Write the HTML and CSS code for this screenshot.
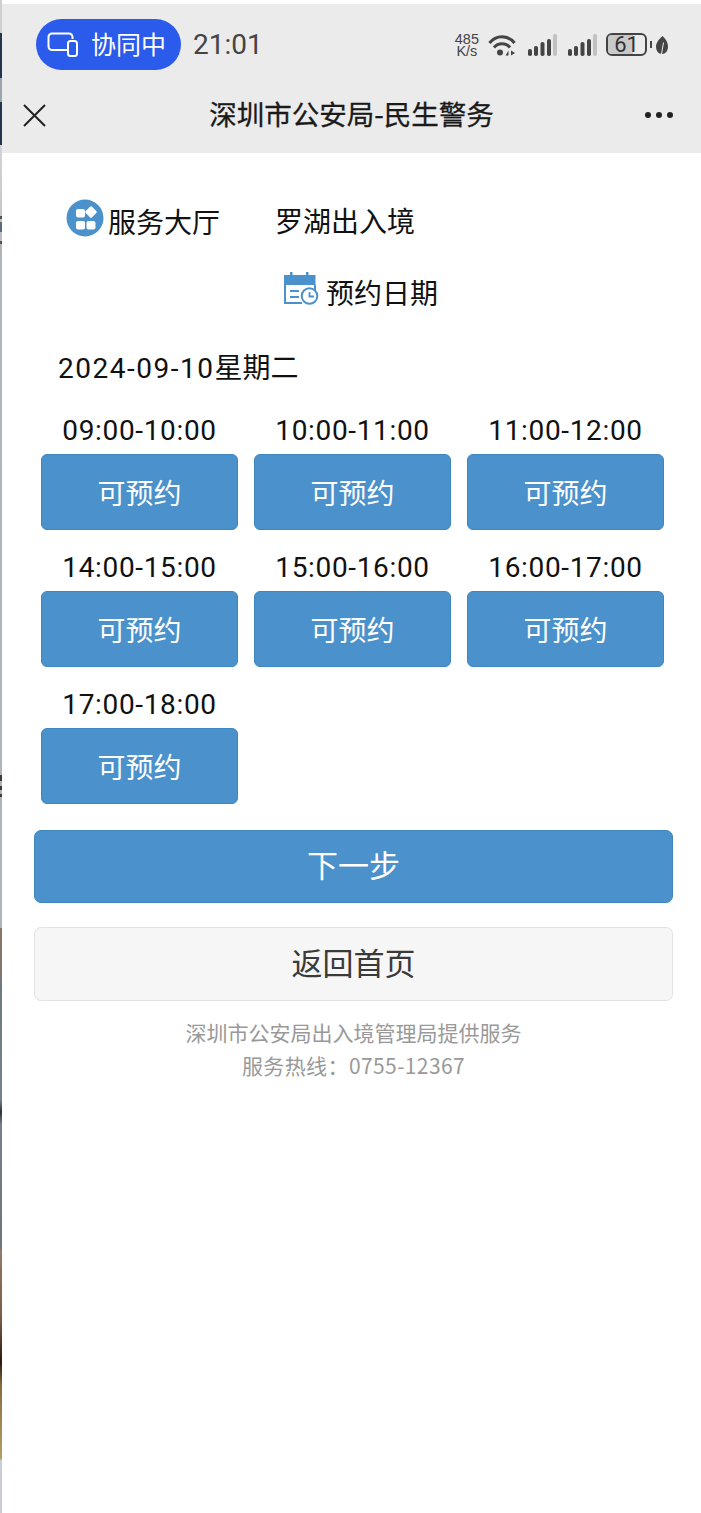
FILE: index.html
```html
<!DOCTYPE html>
<html lang="zh-CN">
<head>
    <meta charset="UTF-8">
    <meta name="viewport" content="width=device-width, initial-scale=1.0">
    <title>深圳市公安局-民生警务</title>
    <link rel="stylesheet" href="styles.css">
</head>
<body>
    <div class="edge"></div>
    <main class="phone">
        <header class="top">
            <div class="status">
                <div class="pill">
                    <svg class="pill_icon" width="32" height="26" viewBox="0 0 32 26" fill="none" stroke="#fff" stroke-width="2">
                        <path d="M21 18H5a3.500 3.500 0 0 1-3.500-3.500V5A3.500 3.500 0 0 1 5 1.500h17A3.500 3.500 0 0 1 25.500 5v2"/>
                        <rect x="21" y="9" width="9" height="15" rx="2.500"/>
                    </svg>
                    <span class="pill_text">协同中</span>
                </div>
                <span class="clock">21:01</span>
                <div class="indicators">
                    <div class="speed">485<br>K/s</div>
                    <svg class="wifi" width="28" height="22" viewBox="0 0 28 22" fill="none" stroke="#444" stroke-width="3">
                        <path d="M1.500 9C8 0.500 20 0.500 26.500 9"/>
                        <path d="M6 13.500C10 8.500 18 8.500 22 13.500"/>
                        <circle cx="12" cy="18.500" r="3" fill="#444" stroke="none"/>
                        <path d="M20.500 21.500V16.500L17.500 21.500zM23 16.500V21.500L27 19z" fill="#444" stroke="none"/>
                    </svg>
                    <svg class="bars" width="29" height="22" viewBox="0 0 29 22">
                        <rect x="0" y="15" width="4" height="7" rx="1.800" fill="#444"/>
                        <rect x="6" y="12" width="4" height="10" rx="1.800" fill="#444"/>
                        <rect x="12.500" y="8" width="4" height="14" rx="1.800" fill="#444"/>
                        <rect x="19" y="5" width="4" height="17" rx="1.800" fill="#444"/>
                        <rect x="25" y="0" width="4" height="22" rx="1.800" fill="#c2c2c2"/>
                    </svg>
                    <svg class="bars" width="29" height="22" viewBox="0 0 29 22">
                        <rect x="0" y="15" width="4" height="7" rx="1.800" fill="#444"/>
                        <rect x="6" y="12" width="4" height="10" rx="1.800" fill="#444"/>
                        <rect x="12.500" y="8" width="4" height="14" rx="1.800" fill="#444"/>
                        <rect x="19" y="5" width="4" height="17" rx="1.800" fill="#444"/>
                        <rect x="25" y="0" width="4" height="22" rx="1.800" fill="#c2c2c2"/>
                    </svg>
                    <div class="battery">
                        <div class="battery_fill"></div>
                        <span>61</span>
                    </div>
                    <div class="battery_tip"></div>
                    <svg width="12" height="18" viewBox="0 0 12 18">
                        <path d="M6.500 0C10 3 12 7 12 10.500 12 15 9.500 18 6 18 2.500 18 0 15 0 10.500 0 7 3 3 6.500 0Z" fill="#444"/>
                        <path d="M7.500 6.500L5.500 18" stroke="#ebebeb" stroke-width="1" fill="none"/>
                    </svg>
                </div>
            </div>
            <nav class="titlebar">
                <svg width="24" height="24" viewBox="0 0 24 24" stroke="#222" stroke-width="2">
                    <path d="M2 2l21 21M23 2L2 23"/>
                </svg>
                <h1>深圳市公安局-民生警务</h1>
                <div class="dots"><i></i><i></i><i></i></div>
            </nav>
        </header>

        <section class="content">
            <div class="hall">
                <div class="hall_label">
                    <svg width="38" height="38" viewBox="0 0 38 38">
                        <circle cx="19" cy="19" r="18.500" fill="#4b91cb"/>
                        <rect x="10" y="10" width="9" height="8.500" rx="2" fill="#fff"/>
                        <rect x="20.500" y="8.500" width="9" height="9" rx="1.500" fill="#fff" transform="rotate(45 25 13)"/>
                        <rect x="10" y="22" width="9" height="8.500" rx="2" fill="#fff"/>
                        <rect x="20.500" y="22" width="9" height="8.500" rx="2" fill="#fff"/>
                    </svg>
                    <span>服务大厅</span>
                </div>
                <span class="hall_name">罗湖出入境</span>
            </div>

            <div class="date_title">
                <svg width="35" height="33" viewBox="0 0 35 33">
                    <path d="M0 3h6V0h2.500v3h13.500V0h2.500v3h7v10H0z" fill="#4b91cb"/>
                    <path d="M1 13v18h17M31 13v5" fill="none" stroke="#4b91cb" stroke-width="2"/>
                    <path d="M6 18h9v2H6zM6 24h9v2H6z" fill="#4b91cb"/>
                    <circle cx="25.500" cy="24" r="7.800" fill="#fff" stroke="#4b91cb" stroke-width="2"/>
                    <path d="M25.500 20V24.500H30" fill="none" stroke="#4b91cb" stroke-width="1.800"/>
                </svg>
                <span>预约日期</span>
            </div>

            <p class="date"><span class="digits">2024-09-10</span>星期二</p>

            <div class="slots">
                <div class="slot"><label>09:00-10:00</label><button>可预约</button></div>
                <div class="slot"><label>10:00-11:00</label><button>可预约</button></div>
                <div class="slot"><label>11:00-12:00</label><button>可预约</button></div>
                <div class="slot"><label>14:00-15:00</label><button>可预约</button></div>
                <div class="slot"><label>15:00-16:00</label><button>可预约</button></div>
                <div class="slot"><label>16:00-17:00</label><button>可预约</button></div>
                <div class="slot"><label>17:00-18:00</label><button>可预约</button></div>
            </div>

            <button class="btn_next">下一步</button>
            <button class="btn_home">返回首页</button>

            <footer class="note">
                <p>深圳市公安局出入境管理局提供服务</p>
                <p class="hotline">服务热线：0755-12367</p>
            </footer>
        </section>
    </main>
</body>
</html>
```

FILE: styles.css
```css
* {
    padding: 0;
    margin: 0;
    box-sizing: border-box;
}
html, body {
    height: 100%;
}
body {
    display: flex;
    background: #fff;
    font-family: "Noto Sans CJK SC", "Noto Sans", sans-serif;
    color: #111;
    overflow: hidden;
}
/* sliver of the window underneath */
.edge {
    width: 2px;
    flex-shrink: 0;
    background: linear-gradient(180deg,
        #cfcfcf 0, #cfcfcf 33px,
        #24344c 33px, #24344c 78px, #9aa3ae 78px, #9aa3ae 102px, #24344c 102px, #24344c 145px,
        #d2d3d5 145px, #c6c8ca 216px, #555 216px, #555 219px, #c0c2c4 219px, #c0c2c4 222px,
        #5a6a80 222px, #5a6a80 232px, #bcbec0 232px, #bcbec0 241px, #555 241px, #555 244px,
        #b0b5ba 244px, #aeb4ba 775px, #3c3c3c 775px, #3c3c3c 781px, #aeb4ba 781px, #aeb4ba 786px,
        #3c3c3c 786px, #3c3c3c 790px, #aeb4ba 790px, #aeb4ba 794px, #3c3c3c 794px, #3c3c3c 797px,
        #aeb4ba 797px, #aeb4ba 928px,
        #8a766a 928px, #84766c 970px, #6f7a80 985px, #76828a 1100px, #2c3238 1112px, #76808a 1125px,
        #6e767a 1248px, #947a68 1250px, #7a5a44 1320px, #2a1a12 1362px, #8a6a40 1385px, #b5a065 1459px,
        #c9ccd4 1460px, #c9ccd4 1513px);
}
.phone {
    flex: 1;
    min-width: 0;
}
.top {
    margin-top: 4px;
    height: 149px;
    background: #ebebeb;
}
.status {
    display: flex;
    align-items: center;
    height: 77px;
    padding: 5px 33px 0 34px;
}
.pill {
    display: flex;
    align-items: center;
    gap: 12px;
    width: 145px;
    height: 51px;
    margin-top: -1px;
    padding-left: 11px;
    border-radius: 26px;
    background: #2a5bea;
    color: #fff;
    font-size: 25px;
}
.pill_icon {
    flex-shrink: 0;
}
.pill_text {
    margin-top: -3px;
}
.clock {
    margin-left: 12px;
    margin-top: -2px;
    font-family: "Roboto", sans-serif;
    font-size: 28px;
    color: #444;
}
.indicators {
    display: flex;
    align-items: center;
    margin-left: auto;
    margin-top: -1px;
}
.speed {
    margin-right: 9px;
    text-align: center;
    font-family: "Liberation Sans", sans-serif;
    font-size: 14.5px;
    line-height: 12px;
    color: #444;
}
.bars {
    margin-left: 12px;
}
.bars + .bars {
    margin-left: 11px;
}
.battery {
    position: relative;
    width: 41px;
    height: 23px;
    margin-left: 9px;
    border: 2px solid #444;
    border-radius: 6px;
    overflow: hidden;
    text-align: center;
    font-family: "Roboto", sans-serif;
    font-size: 22px;
    line-height: 19px;
    color: #333;
}
.battery span {
    position: relative;
}
.battery_fill {
    position: absolute;
    top: 0;
    bottom: 0;
    left: 0;
    width: 68%;
    background: #c9c9c9;
}
.battery_tip {
    width: 2px;
    height: 7px;
    margin: 0 4px 0 3px;
    background: #444;
}
.titlebar {
    position: relative;
    display: flex;
    align-items: center;
    justify-content: space-between;
    height: 72px;
    padding: 0 28px 4px 20px;
}
.titlebar h1 {
    position: absolute;
    left: 0;
    right: 0;
    margin-top: -4px;
    text-align: center;
    font-size: 27.5px;
    font-weight: 400;
    -webkit-text-stroke: 0.3px #1a1a1a;
    color: #1a1a1a;
}
.dots {
    display: flex;
    gap: 5px;
}
.dots i {
    width: 6px;
    height: 6px;
    border-radius: 50%;
    background: #222;
}
.content {
    padding: 0 28px 0 32px;
}
.hall {
    display: flex;
    align-items: center;
    height: 40px;
    margin-top: 48px;
    padding-left: 32px;
    font-size: 28px;
}
.hall_label {
    display: flex;
    align-items: center;
}
.hall_label svg {
    margin-right: 4px;
    margin-top: -6px;
}
.hall_name {
    margin-left: 55px;
    margin-top: -2px;
}
.date_title {
    display: flex;
    align-items: center;
    justify-content: center;
    gap: 7px;
    height: 40px;
    margin-top: 31px;
    font-size: 28px;
    padding-left: 15px;
}
.date_title svg {
    margin-top: -7px;
}
.date {
    margin-top: 34px;
    padding-left: 24px;
    font-size: 28px;
    line-height: 40px;
}
.digits {
    font-family: "Roboto", sans-serif;
    letter-spacing: 1.5px;
}
.slots {
    display: grid;
    grid-template-columns: repeat(3, 197px);
    column-gap: 16px;
    row-gap: 17px;
    margin: 21px 0 0 7px;
}
.slot {
    display: flex;
    flex-direction: column;
}
.slot label {
    height: 44px;
    line-height: 41px;
    text-align: center;
    font-family: "Roboto", sans-serif;
    font-size: 28px;
    letter-spacing: 0.65px;
}
.slot button {
    height: 76px;
    border: 1px solid #3f86bf;
    border-radius: 6px;
    background: #4b91cb;
    color: #fff;
    font-family: inherit;
    font-size: 28px;
}
.btn_next, .btn_home {
    display: block;
    width: 639px;
    border-radius: 7px;
    font-family: inherit;
    font-size: 31px;
}
.btn_next {
    height: 73px;
    margin-top: 26px;
    padding-bottom: 6px;
    border: 1px solid #3f86bf;
    background: #4b91cb;
    color: #fff;
}
.btn_home {
    height: 74px;
    margin-top: 24px;
    padding-bottom: 6px;
    border: 1px solid #e2e2e2;
    background: #f6f6f6;
    color: #3a3a3a;
}
.note {
    margin-top: 15px;
    text-align: center;
    font-size: 21px;
    line-height: 33px;
    color: #999;
}
.hotline {
    letter-spacing: 0.4px;
}
```
